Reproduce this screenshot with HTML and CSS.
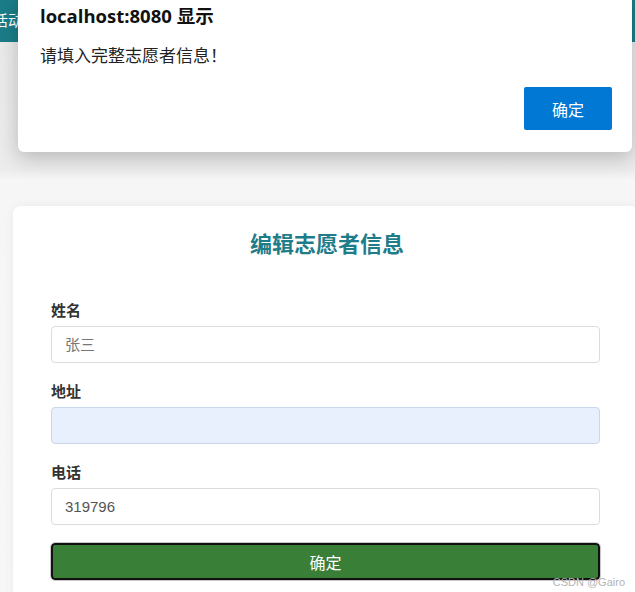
FILE: index.html
```html
<!DOCTYPE html>
<html lang="zh">
<head>
<meta charset="utf-8">
<title>编辑志愿者信息</title>
<link rel="stylesheet" href="styles.css">
</head>
<body>
<div class="page">
  <header class="topbar"><span class="topbar-text">活动</span></header>
  <main class="card">
    <h2 class="card-title">编辑志愿者信息</h2>
    <form class="form">
      <div class="field">
        <label class="label">姓名</label>
        <input class="input" type="text" placeholder="张三">
      </div>
      <div class="field">
        <label class="label">地址</label>
        <input class="input input-autofill" type="text">
      </div>
      <div class="field">
        <label class="label">电话</label>
        <input class="input" type="text" value="319796">
      </div>
      <button class="submit" type="button">确定</button>
    </form>
  </main>
</div>
<div class="dialog">
  <div class="dialog-title">localhost:8080 显示</div>
  <div class="dialog-msg">请填入完整志愿者信息！</div>
  <div class="dialog-actions"><button class="dialog-btn" type="button">确定</button></div>
</div>
<div class="watermark">CSDN @Gairo</div>
</body>
</html>
```
FILE: styles.css
```css
* { box-sizing: border-box; }
html, body { margin: 0; padding: 0; }
body {
  width: 635px;
  height: 592px;
  overflow: hidden;
  position: relative;
  font-family: "Noto Sans CJK SC", "Noto Sans", sans-serif;
  background: linear-gradient(180deg, #e9e9e9 0px, #ececec 170px, #f6f6f6 180px, #f7f7f7 100%);
}
.page { display: flex; flex-direction: column; }
.topbar {
  height: 42px;
  background: #1b7d88;
  display: flex;
  align-items: center;
}
.topbar-text {
  color: #ffffff;
  font-size: 15px;
  margin-left: -7px;
  margin-top: -4px;
}
.card {
  margin: 164px 0 0 13px;
  width: 625px;
  flex-shrink: 0;
  background: #ffffff;
  border-radius: 8px;
  padding: 20px 38px 30px;
  box-shadow: 0 0 12px rgba(0,0,0,0.05);
}
.card-title {
  margin: 0;
  text-align: center;
  font-size: 22px;
  line-height: 32px;
  font-weight: 700;
  color: #1f7d8a;
  padding-left: 3px;
}
.form { display: flex; flex-direction: column; margin-top: 42px; }
.field { display: flex; flex-direction: column; margin-bottom: 18px; }
.label {
  font-size: 15px;
  line-height: 20px;
  font-weight: 700;
  color: #333333;
  margin-bottom: 6px;
}
.input {
  height: 37px;
  border: 1px solid #dcdcdc;
  border-radius: 4px;
  padding: 0 13px;
  font-family: "Liberation Sans", "Noto Sans CJK SC", sans-serif;
  font-size: 15px;
  color: #555555;
  background: #ffffff;
  outline: none;
}
.input::placeholder { color: #777777; font-family: "Noto Sans CJK SC", sans-serif; }
.input-autofill { background: #e8f0fe; border-color: #c8d7ea; }
.submit {
  height: 37px;
  margin-top: 0;
  border: 2px solid #111;
  border-radius: 4px;
  background: #3a7f38;
  color: #ffffff;
  font-family: "Noto Sans CJK SC", sans-serif;
  font-size: 16px;
  outline: 1px solid #c8c8c8;
  outline-offset: 0;
  box-shadow: 0 0 0 1px #ffffff;
}
.dialog {
  position: absolute;
  left: 18px;
  top: -8px;
  width: 614px;
  height: 160px;
  background: #ffffff;
  border-radius: 6px;
  box-shadow: 0 6px 20px rgba(0,0,0,0.22);
  padding: 10px 20px 0 22px;
  display: flex;
  flex-direction: column;
}
.dialog-title {
  font-family: "Open Sans", "Noto Sans CJK SC", sans-serif;
  font-weight: 700;
  font-size: 18.5px;
  line-height: 28px;
  color: #111111;
}
.dialog-msg {
  margin-top: 13px;
  font-size: 17px;
  line-height: 24px;
  color: #222222;
}
.dialog-actions {
  display: flex;
  justify-content: flex-end;
  margin-top: 20px;
}
.dialog-btn {
  width: 88px;
  height: 43px;
  border: none;
  border-radius: 2px;
  background: #0078d4;
  color: #ffffff;
  font-family: "Noto Sans CJK SC", sans-serif;
  font-size: 16px;
}
.watermark {
  position: absolute;
  right: 10px;
  bottom: 4px;
  font-family: "Liberation Sans", sans-serif;
  font-size: 11px;
  color: #b4b4b4;
}
```
